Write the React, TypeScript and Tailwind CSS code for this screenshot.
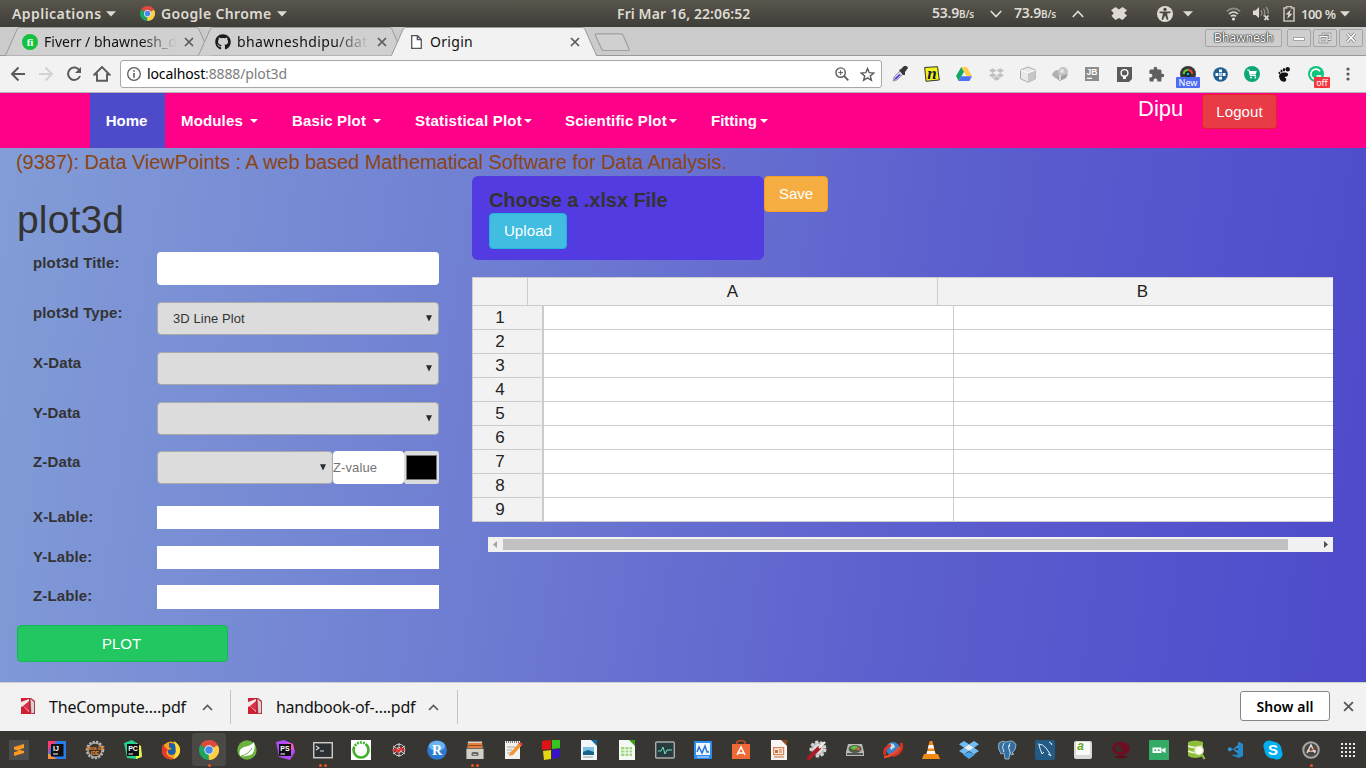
import React from 'react';
import { FaGithub, FaDropbox } from 'react-icons/fa';
import { MdExtension } from 'react-icons/md';

const ui = "font-['Noto_Sans',sans-serif]";
const sans = "font-['Liberation_Sans',Arial,sans-serif]";

/* ---------- small shared drawings ---------- */

function Chrome({ size }: { size: number }) {
  return (
    <svg width={size} height={size} viewBox="0 0 48 48" className="shrink-0">
      <path d="M24 24 L3.2 12 A24 24 0 0 1 44.8 12 Z" fill="#dd4b3e" />
      <path d="M24 24 L24 48 A24 24 0 0 1 3.2 12 Z" fill="#1da462" />
      <path d="M24 24 L44.8 12 A24 24 0 0 1 24 48 Z" fill="#ffce44" />
      <path d="M24 13 H45.3 L44 11 A24 24 0 0 0 24 0Z" fill="#dd4b3e" />
      <path d="M14.5 29.5 L3.2 12 L13 18Z" fill="#1da462" />
      <path d="M33.5 29.5 L24 48 L23 34Z" fill="#ffce44" />
      <circle cx="24" cy="24" r="11.2" fill="#f4f4f4" />
      <circle cx="24" cy="24" r="9" fill="#4688f1" />
    </svg>
  );
}

const Tri = () => (
  <svg width="10" height="6" viewBox="0 0 10 6" className="shrink-0">
    <path d="M0 0.3H10L5 5.5Z" fill="#dfdbd2" />
  </svg>
);

const Close = ({ size = 10 }: { size?: number }) => (
  <svg width={size} height={size} viewBox="0 0 10 10" className="shrink-0">
    <path d="M1 1L9 9M9 1L1 9" stroke="#5a5a5a" strokeWidth="1.7" fill="none" />
  </svg>
);

/* ---------- desktop top panel ---------- */

function TopPanel() {
  return (
    <div className={`flex h-[27px] w-full items-center bg-linear-to-b from-[#59564d] to-[#3e3d38] text-[14px] leading-[26px] font-semibold text-[#dfdbd2] ${ui}`}>
      <span className="ml-3 w-[94px] whitespace-nowrap tracking-[0.45px]">Applications</span>
      <Tri />
      <div className="ml-[24px] flex w-[21px]"><Chrome size={15} /></div>
      <span className="w-[116px] whitespace-nowrap tracking-[0.35px]">Google Chrome</span>
      <Tri />
      <span className="ml-[330px] w-[315px] whitespace-nowrap tracking-[0.1px]">Fri Mar 16, 22:06:52</span>
      <span className="w-[58px] whitespace-nowrap leading-[24px] tracking-[-0.2px]">53.9<span className="text-[10px]">B/s</span></span>
      <svg width="12" height="8" viewBox="0 0 12 8"><path d="M0.8 1L6 6.6L11.2 1" stroke="#dfdbd2" strokeWidth="1.7" fill="none" /></svg>
      <span className="ml-[12px] w-[58px] whitespace-nowrap leading-[24px] tracking-[-0.2px]">73.9<span className="text-[10px]">B/s</span></span>
      <svg width="12" height="8" viewBox="0 0 12 8"><path d="M0.8 7L6 1.4L11.2 7" stroke="#dfdbd2" strokeWidth="1.7" fill="none" /></svg>
      <svg className="ml-[27px]" width="16" height="14" viewBox="0 0 16 14">
        <path d="M4.5 0L8 2.5L11.5 0L16 3.2L13.2 6L16 8.4L11.5 13L8 11L4.5 13L0.5 9L2.8 6L0 3.2Z" fill="#dfdbd2" />
      </svg>
      <svg className="ml-[30px]" width="16" height="16" viewBox="0 0 16 16">
        <circle cx="8" cy="8" r="8" fill="#dfdbd2" />
        <circle cx="8" cy="3.4" r="1.7" fill="#4a4841" />
        <path d="M2.5 5.6L6.5 5.4H9.5L13.5 5.6V7L10 7.4L11.4 13.4L10 13.9L8 9.6L6 13.9L4.6 13.4L6 7.4L2.5 7Z" fill="#4a4841" />
      </svg>
      <div className="ml-[10px]"><Tri /></div>
      <svg className="ml-[33px]" width="15" height="14" viewBox="0 0 15 14" fill="none" strokeWidth="1.6">
        <path d="M0.8 4.4Q7.5 -1.7 14.2 4.4" stroke="#8f8c84" />
        <path d="M3 7Q7.5 3 12 7" stroke="#dfdbd2" />
        <path d="M4.9 9.4Q7.5 7.2 10.1 9.4" stroke="#dfdbd2" />
        <circle cx="7.5" cy="12" r="1.6" fill="#dfdbd2" />
      </svg>
      <svg className="ml-[12px]" width="17" height="15" viewBox="0 0 17 15" fill="none">
        <path d="M0 4.5H2.5L6 1V12L2.5 9H0Z" fill="#dfdbd2" />
        <path d="M8 4Q9.7 6.7 8 9.5M10.5 2.5Q13 6.7 10.5 10.5M13 1Q16 5 15 8" stroke="#8f8c84" strokeWidth="1.4" />
        <path d="M11.5 9.5L15.5 14M15.5 9.5L11.5 14" stroke="#dfdbd2" strokeWidth="1.8" />
      </svg>
      <svg className="ml-[13px]" width="12" height="16" viewBox="0 0 12 16">
        <path d="M3.5 2V0.5H8.5V2H11V15H1V2Z" fill="none" stroke="#c4c0b8" strokeWidth="1.6" />
        <path d="M8 3.5L2.5 8.5H5.5L4 13L9.5 7.7H6.5Z" fill="#dfdbd2" />
      </svg>
      <span className="ml-[6px] w-[39px] whitespace-nowrap text-[13px] tracking-[-0.5px]">100 %</span>
      <Tri />
    </div>
  );
}

/* ---------- browser chrome ---------- */

function Tab({ icon, label, active = false, tracking = '' }: { icon: React.ReactNode; label: string; active?: boolean; tracking?: string }) {
  return (
    <div className="relative -mr-[13px] flex h-[29px] w-[206px] shrink-0 items-center pl-[16px]">
      <svg className="absolute inset-0" width="206" height="29" viewBox="0 0 206 29">
        <path d="M0.5 28.5 L12 2.5 Q13 0.5 14.5 0.5 H191.5 Q193 0.5 194 2.5 L205.5 28.5" fill={active ? '#f2f2f2' : '#d0d0d0'} stroke="#999" strokeWidth="1" />
        {active && <path d="M1 28.5H205" stroke="#f2f2f2" />}
      </svg>
      <div className="relative flex w-[18px] items-center justify-center">{icon}</div>
      <div className="relative ml-[5px] w-[135px] overflow-hidden">
        <div className={`whitespace-nowrap text-[14px] leading-[20px] text-[#111] ${tracking} ${active ? '' : 'mask-r-from-72% mask-r-to-98%'}`}>{label}</div>
      </div>
      <div className="relative ml-[5px] flex"><Close /></div>
    </div>
  );
}

function WinBtn({ children }: { children: React.ReactNode }) {
  return (
    <div className="flex h-[18px] w-[24px] items-center justify-center rounded-[2px] border border-[#a5a5a5] bg-[#cfcfcf]">
      <svg width="14" height="12" viewBox="0 0 14 12">{children}</svg>
    </div>
  );
}

function TabStrip() {
  return (
    <div className={`flex h-[29px] w-full items-start border-b border-[#999] bg-[#cbcbcb] pl-[5px] ${ui}`}>
      <Tab
        label="Fiverr / bhawnesh_d"
        icon={
          <svg width="16" height="16" viewBox="0 0 16 16">
            <circle cx="8" cy="8" r="8" fill="#13c13f" />
            <text x="8" y="12" textAnchor="middle" fontSize="11" fontWeight="700" fill="#fff" fontFamily="Liberation Serif">fi</text>
          </svg>
        }
      />
      <Tab label="bhawneshdipu/dat" tracking="tracking-[0.4px]" icon={<FaGithub size={16} color="#1b1b1b" />} />
      <Tab
        active
        label="Origin"
        tracking="tracking-[0.3px]"
        icon={
          <svg width="11" height="14" viewBox="0 0 11 14">
            <path d="M0.7 0.7H6.5L10.3 4.5V13.3H0.7ZM6.3 0.7V4.7H10.3" fill="#fff" stroke="#555" strokeWidth="1.3" />
          </svg>
        }
      />
      <svg className="ml-[10px] mt-[6px]" width="37" height="19" viewBox="0 0 37 19">
        <path d="M2.5 0.8H27Q28.5 0.8 29 2L35 16Q35.5 17.5 34 17.5H10Q8.3 17.5 7.6 16L1.5 2.5Q1 0.8 2.5 0.8Z" fill="#d0d0d0" stroke="#a0a0a0" strokeWidth="1.2" />
      </svg>
      <div className="ml-auto mr-[3px] mt-[2px] flex">
        <div className="mr-[5px] flex h-[18px] w-[77px] items-center justify-center rounded-[2px] border border-[#a5a5a5] bg-[#cfcfcf] text-[12.5px] tracking-[-0.2px] text-white [text-shadow:0_0_1px_#000,0_0_2px_#333,0_0_1px_#000]">Bhawnesh</div>
        <div className="flex gap-[2px]">
          <WinBtn><path d="M1.5 5.5H12.5V8.5H1.5Z" fill="#fff" stroke="#888" strokeWidth=".7" /></WinBtn>
          <WinBtn>
            <path d="M5 2H12V7.5H5Z" fill="none" stroke="#777" strokeWidth="2.4" /><path d="M5 2H12V7.5H5Z" fill="none" stroke="#fff" strokeWidth="1.2" />
            <path d="M2 4.5H9V10H2Z" fill="#ccc" stroke="#777" strokeWidth="2.4" /><path d="M2 4.5H9V10H2Z" fill="none" stroke="#fff" strokeWidth="1.2" />
          </WinBtn>
          <WinBtn><path d="M3 1.5L11 10M11 1.5L3 10" stroke="#777" strokeWidth="3" /><path d="M3 1.5L11 10M11 1.5L3 10" stroke="#fff" strokeWidth="1.7" /></WinBtn>
        </div>
      </div>
    </div>
  );
}

const extensions: React.ReactNode[] = [
  <svg width="16" height="16" viewBox="0 0 16 16"><path d="M1 15L2 11L8 5L11 8L5 14Z" fill="#d8d8ea" stroke="#777" strokeWidth=".7" /><path d="M2 14L3 12L7.5 8L8.7 9L4.5 13Z" fill="#4d36d8" /><path d="M7 4L9 3L12 0Q15-1 16 2L13 6L13 9L11 9Z" fill="#3a3a3a" /></svg>,
  <svg width="16" height="16" viewBox="0 0 16 16"><path d="M0.7 1.5L13.5 0.7L15.3 14L2 15.3Z" fill="#f2f316" stroke="#333" strokeWidth="1" /><text x="8" y="13" textAnchor="middle" fontSize="17" fontStyle="italic" fontWeight="700" fill="#17173a" fontFamily="Liberation Serif">n</text></svg>,
  <svg width="16" height="14" viewBox="0 0 16 14"><path d="M5.3 0L0 9L2.7 14L8 4.7Z" fill="#11a861" /><path d="M5.3 0H10.7L16 9H10.6Z" fill="#ffcf48" /><path d="M5.2 9.2H16L13.3 14H2.6Z" fill="#4d6ff5" /></svg>,
  <FaDropbox size={15} color="#c0c0c0" />,
  <svg width="18" height="17" viewBox="0 0 18 17"><path d="M1.5 4L9 1L16.5 4V12.8L9 16.3L1.5 12.8Z" fill="#e8e8e8" stroke="#aaa" /><path d="M9 7L16.5 4V12.8L9 16.3Z" fill="#c6c6c6" /><path d="M1.5 4L9 7L16.5 4" fill="none" stroke="#fff" /></svg>,
  <svg width="17" height="16" viewBox="0 0 17 16"><path d="M0 9Q1 5 5 4L9 6L8 12L3 12Z" fill="#b0b0b0" /><circle cx="11" cy="6" r="5" fill="#c4c4c4" /><path d="M4 12L9 10L16 8L14 12L8 15Z" fill="#a0a0a0" /><circle cx="10" cy="5" r="2" fill="#e4e4e4" /><path d="M7 9H9V14H7Z" fill="#ddd" /></svg>,
  <svg width="14" height="14" viewBox="0 0 14 14"><rect width="14" height="14" fill="#8d8d8d" /><text x="7" y="8" textAnchor="middle" fontSize="8.5" fontWeight="700" fill="#fff" fontFamily="Liberation Sans">JB</text><path d="M2 11.3H7" stroke="#fff" strokeWidth="1.3" /></svg>,
  <svg width="15" height="15" viewBox="0 0 15 15"><path d="M0 0H15V12L12 15H0Z" fill="#5b5b5b" /><circle cx="7.5" cy="6" r="3.4" fill="none" stroke="#fff" strokeWidth="1.4" /><path d="M6 8.5H9V12H6Z" fill="#fff" /></svg>,
  <MdExtension size={17} color="#5f5f5f" />,
  <div className="relative h-4 w-4"><svg width="16" height="16" viewBox="0 0 16 16"><circle cx="8" cy="8" r="8" fill="#35373c" /><path d="M3.8 8A4.2 4.2 0 0 1 8 3.8" stroke="#5ad02a" strokeWidth="2.2" fill="none" /><path d="M8 3.8A4.2 4.2 0 0 1 12 8" stroke="#e7482b" strokeWidth="2.2" fill="none" /><circle cx="8" cy="8" r="2.6" fill="#111" /><circle cx="8" cy="8" r="1.5" fill="#07b5d3" /></svg><span className="absolute -left-[4px] top-[11px] flex h-[11px] w-[24px] items-center justify-center rounded-[1px] bg-[#4d6cf5] text-[9px] text-white">New</span></div>,
  <svg width="15" height="15" viewBox="0 0 15 15"><circle cx="7.5" cy="7.5" r="7.3" fill="#1f5d93" /><path d="M6 2.5H9V5.3H6ZM6 9.7H9V12.5H6ZM2.5 6H5.3V9H2.5ZM9.7 6H12.5V9H9.7Z" fill="#fff" /><path d="M6 6H9V9H6Z" fill="#a6cdf0" /></svg>,
  <svg width="16" height="16" viewBox="0 0 16 16"><circle cx="8" cy="8" r="8" fill="#0ca678" /><path d="M3 4H5L6.3 9.5H12" stroke="#fff" strokeWidth="1.1" fill="none" /><path d="M5.5 5H12.7L11.7 8.6H6.3Z" fill="#fff" /><circle cx="7" cy="11.5" r="1" fill="#fff" /><circle cx="11.3" cy="11.5" r="1" fill="#fff" /></svg>,
  <svg width="12" height="15" viewBox="0 0 12 15"><ellipse cx="9.7" cy="2.3" rx="2.2" ry="2.3" fill="#111" /><ellipse cx="6" cy="2.7" rx="1.2" ry="1.7" fill="#111" /><ellipse cx="3.5" cy="4" rx="1" ry="1.5" fill="#111" /><ellipse cx="1.4" cy="6" rx=".9" ry="1.3" fill="#111" /><path d="M1 9Q2 5 7 5.5Q11 6 10 8.3Q9 10 7 9.8Q6 11 8 11.3Q9 14.5 6 14.8Q1.5 14.5 1 9Z" fill="#111" /></svg>,
  <div className="relative h-4 w-4"><svg width="16" height="16" viewBox="0 0 16 16"><circle cx="8" cy="8" r="8" fill="#0fc47d" /><path d="M12 5.3A5 5 0 1 0 12.5 10H8.5" stroke="#fff" strokeWidth="1.6" fill="none" /></svg><span className="absolute left-[6px] top-[11px] flex h-[11px] w-[16px] items-center justify-center rounded-[1px] bg-[#f6353c] text-[9px] text-white">off</span></div>,
  <svg width="4" height="14" viewBox="0 0 4 14" fill="#5a5a5a"><circle cx="2" cy="2" r="1.6" /><circle cx="2" cy="7" r="1.6" /><circle cx="2" cy="12" r="1.6" /></svg>,
];

function Toolbar() {
  return (
    <div className={`flex h-[37px] w-full items-center border-b border-[#b5b5b5] bg-[#f2f2f2] ${ui}`}>
      <div className="flex w-[121px] pl-1">
        <div className="flex w-7 justify-center"><svg width="16" height="16" viewBox="0 0 16 16"><path d="M15 8H2M8.5 1.5L2 8L8.5 14.5" stroke="#5a5a5a" strokeWidth="2" fill="none" /></svg></div>
        <div className="flex w-7 justify-center"><svg width="16" height="16" viewBox="0 0 16 16"><path d="M1 8H14M7.5 1.5L14 8L7.5 14.5" stroke="#d2d2d2" strokeWidth="2" fill="none" /></svg></div>
        <div className="flex w-7 justify-center"><svg width="16" height="16" viewBox="0 0 16 16"><path d="M13.6 4.6A6.2 6.2 0 1 0 14 10" stroke="#5a5a5a" strokeWidth="2" fill="none" /><path d="M15 1V7H9Z" fill="#5a5a5a" /></svg></div>
        <div className="flex w-7 justify-center"><svg width="18" height="16" viewBox="0 0 18 16"><path d="M1.5 8.5L9 1L16.5 8.5H14V14.7H4V8.5Z" stroke="#5a5a5a" strokeWidth="1.9" fill="none" /></svg></div>
      </div>
      <div className="-ml-px flex h-[28px] w-[762px] items-center rounded-[3px] border border-[#a8a8a8] bg-white pl-[6px]">
        <svg width="14" height="14" viewBox="0 0 14 14"><circle cx="7" cy="7" r="6.3" fill="none" stroke="#5a5a5a" strokeWidth="1.3" /><path d="M6.2 3.2H7.8V4.8H6.2ZM6.2 6H7.8V10.8H6.2Z" fill="#5a5a5a" /></svg>
        <span className="mb-px ml-[6px] whitespace-nowrap text-[14px] tracking-[-0.12px] text-black">localhost<span className="text-[#7d7d7d]">:8888/plot3d</span></span>
        <svg className="ml-auto" width="14" height="14" viewBox="0 0 14 14" fill="none" stroke="#5a5a5a"><circle cx="5.6" cy="5.6" r="4.7" strokeWidth="1.4" /><path d="M9.2 9.2L13.3 13.3" strokeWidth="1.8" /><path d="M3.3 5.6H7.9M5.6 3.3V7.9" strokeWidth="1" /></svg>
        <svg className="ml-[11px] mr-[6px]" width="15" height="15" viewBox="0 0 15 15"><path d="M7.5 1.5L9.2 5.7L13.8 6L10.3 8.9L11.4 13.3L7.5 10.9L3.6 13.3L4.7 8.9L1.2 6L5.8 5.7Z" fill="none" stroke="#5a5a5a" strokeWidth="1.4" /></svg>
      </div>
      <div className="ml-[2px] flex">
        {extensions.map((e, i) => (
          <div key={i} className="flex h-5 w-8 items-center justify-center">{e}</div>
        ))}
      </div>
    </div>
  );
}

/* ---------- site navigation ---------- */

const Caret = () => <span className="inline-block border-x-4 border-t-4 border-x-transparent border-t-white" />;

function SiteNav() {
  return (
    <div className={`flex h-[55px] w-full bg-[#ff0089] pl-[90px] text-[15px] font-bold text-white ${sans}`}>
      <div className="flex w-[75px] items-center justify-center bg-[#4e4bcb] pr-[2px] pt-px">Home</div>
      <div className="ml-4 flex w-[111px] items-center gap-[7px] pt-px tracking-[0.15px]">Modules <Caret /></div>
      <div className="flex w-[123px] items-center gap-[7px] pt-px tracking-[0.15px]">Basic Plot <Caret /></div>
      <div className="flex w-[150px] items-center gap-[2px] pt-px tracking-[0.22px]">Statistical Plot <Caret /></div>
      <div className="flex w-[146px] items-center gap-[2px] pt-px tracking-[0.18px]">Scientific Plot <Caret /></div>
      <div className="flex items-center gap-[3px] pt-px">Fitting <Caret /></div>
      <div className="ml-auto mr-[89px] flex items-start font-normal">
        <span className="w-[64px] text-[22px] leading-[32px]">Dipu</span>
        <button className="mt-px h-[35px] w-[75px] rounded-[4px] border border-[#e5232f] bg-[#e83b45] pt-px text-[15px] tracking-[0.1px]">Logout</button>
      </div>
    </div>
  );
}

/* ---------- page content ---------- */

function FakeSelect({ value = '', className }: { value?: string; className: string }) {
  return (
    <div className={`flex h-[33px] items-center justify-between rounded-[4px] border border-[#a9a9a9] bg-[#dcdcdc] pl-[15px] pr-[6px] text-[13px] text-[#333] ${className}`}>
      <span className="tracking-[0.08px]">{value}</span>
      <svg width="6" height="7" viewBox="0 0 7 7" preserveAspectRatio="none"><path d="M0 0.3H7L3.5 6.5Z" fill="#2b2b2b" /></svg>
    </div>
  );
}

function Row({ label, height, children }: { label: string; height: string; children: React.ReactNode }) {
  return (
    <div className={`flex items-start pl-4 ${height}`}>
      <div className="w-[124px] text-[15px] leading-[22px] font-bold tracking-[0.14px] text-[#333]">{label}</div>
      {children}
    </div>
  );
}

function PlotForm() {
  return (
    <div className="w-[455px]">
      <h1 className="flex h-[76px] items-center pt-[11px] text-[39px] leading-[43px] tracking-[0.15px] text-[#333]">plot3d</h1>
      <Row label="plot3d Title:" height="h-[50px]"><div className="h-[33px] w-[282px] rounded-[4px] bg-white" /></Row>
      <Row label="plot3d Type:" height="h-[50px]"><FakeSelect value="3D Line Plot" className="w-[282px]" /></Row>
      <Row label="X-Data" height="h-[50px]"><FakeSelect className="w-[282px]" /></Row>
      <Row label="Y-Data" height="h-[49px]"><FakeSelect className="w-[282px]" /></Row>
      <Row label="Z-Data" height="h-[55px]">
        <FakeSelect className="w-[176px]" />
        <div className="flex h-[33px] w-[71px] items-center rounded-[4px] bg-white text-[13px] tracking-[0.1px] text-[#757575]">Z-value</div>
        <div className="flex h-[33px] w-[35px] items-center justify-center rounded-[3px] bg-[#dcdcdc]">
          <div className="h-[25px] w-[31px] border border-[#777] bg-black" />
        </div>
      </Row>
      <Row label="X-Lable:" height="h-[40px]"><div className="h-[23px] w-[282px] bg-white" /></Row>
      <Row label="Y-Lable:" height="h-[39px]"><div className="h-[23px] w-[282px] bg-white" /></Row>
      <Row label="Z-Lable:" height="h-[40px]"><div className="h-[24px] w-[282px] bg-white" /></Row>
      <button className="h-[37px] w-[211px] rounded-[4px] border border-[#13b955] bg-[#22c761] pr-[2px] pt-px text-[15px] text-white">PLOT</button>
    </div>
  );
}

function Sheet() {
  return (
    <div className="mt-[17px] h-[245px] w-[861px] overflow-hidden border-l border-t border-[#ccc] bg-white text-[17px] text-[#222]">
      <div className="flex h-[28px] border-b border-[#ccc] bg-[#f2f2f2]">
        <div className="w-[55px] shrink-0 border-r border-[#ccc]" />
        <div className="flex w-[410px] shrink-0 items-center justify-center border-r border-[#ccc]">A</div>
        <div className="flex w-[409px] shrink-0 items-center justify-center">B</div>
      </div>
      {Array.from({ length: 9 }, (_, i) => (
        <div key={i} className="flex h-[24px] border-b border-[#ccc]">
          <div className="w-[71px] border-r-2 border-[#ccc] bg-[#f2f2f2] pr-[15px] text-center leading-[23px]">{i + 1}</div>
          <div className="w-[410px] border-r border-[#ccc]" />
        </div>
      ))}
    </div>
  );
}

function DataPanel() {
  return (
    <div className="w-[861px]">
      <div className="flex items-start text-[15px] text-white">
        <div className="h-[84px] w-[292px] rounded-[6px] bg-[#533be2] pl-[17px] pt-[12px]">
          <div className="h-[25px] text-[20px] leading-[25px] font-bold tracking-[-0.08px] text-[#333]">Choose a .xlsx File</div>
          <button className="block h-[36px] w-[78px] rounded-[4px] border border-[#1fb5dd] bg-[#40bde0] pt-px tracking-[0.1px]">Upload</button>
        </div>
        <button className="h-[36px] w-[64px] rounded-[4px] border border-[#f59f22] bg-[#f6ae42] pt-px">Save</button>
      </div>
      <Sheet />
      <div className="ml-4 mt-[15px] flex h-[15px] items-center bg-[#f1f1f1]">
        <div className="flex w-[15px] justify-center pr-px"><svg width="4" height="7" viewBox="0 0 4 7"><path d="M4 0V7L0 3.5Z" fill="#a3a3a3" /></svg></div>
        <div className="h-[11px] w-[785px] bg-[#c1c1c1]" />
        <div className="ml-[31px] flex w-[14px] justify-center"><svg width="4" height="7" viewBox="0 0 4 7"><path d="M0 0V7L4 3.5Z" fill="#505050" /></svg></div>
      </div>
    </div>
  );
}

/* ---------- download shelf ---------- */

function Download({ name, width, gap }: { name: string; width: string; gap: string }) {
  return (
    <div className={`my-[7px] flex items-center border-r border-[#c3c3c3] ${width}`}>
      <svg className="mb-[3px]" width="14" height="16" viewBox="0 0 14 16"><path d="M0 0H10L14 3V16H0Z" fill="#cf1f35" /><path d="M0 4L8 1V14L2 8L0 9Z" fill="#f5e8e8" /><path d="M2 8L8 3V13Z" fill="#d83344" /><path d="M9 0L13.5 4V15L10 16Z" fill="#d9d3d3" stroke="#8e1a28" strokeWidth=".6" /></svg>
      <span className={`ml-[14px] whitespace-nowrap text-[16px] text-[#111] ${gap}`}>{name}</span>
      <svg width="11" height="7" viewBox="0 0 11 7"><path d="M1 6L5.5 1.5L10 6" stroke="#5a5a5a" strokeWidth="1.7" fill="none" /></svg>
    </div>
  );
}

function Shelf() {
  return (
    <div className={`flex h-[49px] w-full border-t border-[#cfcfcf] bg-[#f2f2f2] ${ui}`}>
      <Download name="TheCompute….pdf" width="w-[231px] pl-[21px]" gap="w-[153px] tracking-[-0.15px]" />
      <Download name="handbook-of-….pdf" width="w-[227px] pl-[17px]" gap="w-[152px] tracking-[-0.28px]" />
      <div className="mb-[2px] ml-auto mr-[12px] flex items-center gap-[13px]">
        <button className="h-[30px] w-[90px] rounded-[3px] border border-[#868686] bg-white text-[14px] font-semibold tracking-[0.1px] text-black">Show all</button>
        <Close size={11} />
      </div>
    </div>
  );
}

/* ---------- dock ---------- */

const T = ({ x = 10, y, s, f = '#fff', children }: { x?: number; y: number; s: number; f?: string; children: string }) => (
  <text x={x} y={y} fontSize={s} fill={f} textAnchor="middle" fontWeight="700" fontFamily="Liberation Sans">{children}</text>
);

const dock: React.ReactNode[] = [
  <><rect width="20" height="20" rx="1" fill="#4c4c4c" /><path d="M5 7L15 4V8L10 9.7L15 11V13L5 16V12.3L10 10.7L5 9.5Z" fill="#ff9a1f" /></>,
  <><path d="M1 1H12V10L1 15Z" fill="#fb3c72" /><path d="M10 1H19V19H8L1 16L3 8Z" fill="#277df0" /><path d="M1 13L5 16L10 19H1Z" fill="#f9903a" /><rect x="4" y="4" width="12.5" height="12.5" fill="#101010" /><T x={9} y={11} s={7}>IJ</T><path d="M6 14H11" stroke="#fff" /></>,
  <><circle cx="10" cy="10" r="8" fill="none" stroke="#b9b9b9" strokeWidth="2.4" strokeDasharray="2.2 1.3" /><circle cx="10" cy="10" r="7" fill="#3a342f" stroke="#aaa" strokeWidth="1.3" /><T y={10} s={5} f="#e8892b">Java EE</T><T y={15} s={5} f="#e8892b">IDE</T></>,
  <><path d="M1 3L9 0L15 4L19 14L14 19L4 18Z" fill="#22d48c" /><path d="M13 3L18 6L19 17L13 19Z" fill="#e7f24a" /><rect x="4" y="4" width="12" height="12" fill="#101010" /><T y={11} s={7}>PC</T><path d="M5.5 14H10" stroke="#fff" /></>,
  <><circle cx="10" cy="10.5" r="9" fill="#f9a01b" /><path d="M2 4Q0 10 2 15Q7 21 14 18Q6 18 5 12L7 10Q3 7 2 4Z" fill="#e8352b" /><path d="M8 3Q16 2 16 10Q15 15 10 15Q6 14 7 10L11 9L8 7Z" fill="#1c5ea8" /><path d="M13 1Q20 5 19 12Q17 18 12 19Q17 12 13 1Z" fill="#ffdb35" /></>,
  <foreignObject width="20" height="20"><Chrome size={20} /></foreignObject>,
  <><circle cx="10" cy="10" r="9.7" fill="#6ab33e" /><path d="M17 2Q20 16 9 16Q6 16.5 3 16Q1 9 7 7Q14 6 17 2Z" fill="#fff" /><path d="M4 16Q12 14 15 8" stroke="#6ab33e" fill="none" /></>,
  <><path d="M1 2L9 0L18 4L20 12L15 20L4 17Z" fill="#b24bf7" /><path d="M12 2L18 4L19 10L15 9Z" fill="#f65ac0" /><rect x="4" y="4" width="12" height="12" fill="#101010" /><T y={11} s={7}>PS</T><path d="M5.5 14H10" stroke="#fff" /></>,
  <><rect x=".7" y="2.7" width="18.6" height="15" fill="#2c3032" stroke="#c8c8c8" strokeWidth="1.5" /><path d="M3 6L6 8L3 10M7 11H11" stroke="#ddd" strokeWidth="1.1" fill="none" /></>,
  <><rect width="20" height="20" fill="#fff" /><circle cx="10" cy="10" r="7.5" fill="none" stroke="#43b02a" strokeWidth="2.6" strokeDasharray="27 1 2 1 2 1 2 1 2 1" /></>,
  <><g fill="none" stroke="#ddd" strokeWidth=".9"><circle cx="10" cy="10" r="5.8" /><path d="M10 3V17M4 6L16 14M4 14L16 6" /><circle cx="10" cy="10" r="2.5" /></g><path d="M4 11L7 9L9 12L12 8L15 11" stroke="#f02b2b" strokeWidth="2" fill="none" /></>,
  <><circle cx="10" cy="10" r="9.8" fill="#2d7bd1" /><ellipse cx="10" cy="6" rx="8" ry="5" fill="#6cb1f2" /><text x="10" y="15" fontSize="14" fontWeight="700" fill="#fff" textAnchor="middle" fontFamily="Liberation Serif">R</text></>,
  <><path d="M3 1H17L18.5 8V19H1.5V8Z" fill="#6d6964" /><path d="M3 3H17V8H3Z" fill="#e8803c" /><path d="M3 2.3H17" stroke="#eee" /><path d="M3 5.5H17" stroke="#8a4a20" /><path d="M1.5 9H18.5V19H1.5Z" fill="#d3cfc7" /><rect x="6.5" y="12" width="7" height="4" rx="1.5" fill="#666" /><path d="M8 14.7H12" stroke="#ccc" /></>,
  <><path d="M2 1H17V19H2Z" fill="#f1f1ee" /><path d="M3 2H16" stroke="#777" strokeWidth="2" strokeDasharray="1 1" /><path d="M4 7H12M4 10H9M4 13H8" stroke="#aaa" /><path d="M6 16L7 13L16 3L19 5L10 15Z" fill="#ef9637" /><path d="M15.5 3.5L17.5 2L20 4L18.5 6Z" fill="#d63b3b" /></>,
  <><path d="M1 1L10 0V9L1 10Z" fill="#e01212" /><path d="M11 0H19V8L11 9Z" fill="#36c41e" /><path d="M2 11L10 10V19L3 20Z" fill="#e3d714" /><path d="M11 10L19 9V17L11 19Z" fill="#3712c7" /></>,
  <><path d="M2 0H13L18 5V20H2Z" fill="#f2f6f8" /><path d="M12 0H18V6Z" fill="#106ba5" /><rect x="4" y="7" width="11" height="8" fill="#7cc0e4" /><path d="M4 12L9 10L15 12V15H4Z" fill="#16638d" /><path d="M4 17H14" stroke="#999" /></>,
  <><path d="M2 0H13L18 5V20H2Z" fill="#f4f8f2" /><path d="M12 0H18V6Z" fill="#34a10e" /><rect x="4" y="7" width="11" height="9" fill="#9bd67f" /><path d="M4 10H15M4 13H15M8 7V16M12 7V16" stroke="#fff" /></>,
  <><rect x=".7" y="2" width="18.6" height="16" rx="1" fill="#283b3e" stroke="#aaa" strokeWidth="1.4" /><path d="M3 11H6L8 7L10 14L12 10H17" stroke="#6fe3c1" fill="none" /></>,
  <><rect x="1" y="1" width="18" height="18" rx="1" fill="#2d8df1" /><path d="M3 3H17V15H3Z" fill="#f1f8ff" /><path d="M4 12L6 7L9 13L12 6L14 12H16" stroke="#2572d8" strokeWidth="1.5" fill="none" /><path d="M4 17H16" stroke="#fff" strokeWidth=".8" /></>,
  <><path d="M6 5V2Q10-1 14 2V5" fill="none" stroke="#c44a22" strokeWidth="1.6" /><path d="M1 4H19V19H1Z" fill="#ed6a36" /><path d="M6 15L10 7L14 15M7 13H13" stroke="#fff" strokeWidth="1.5" fill="none" /></>,
  <><path d="M2 0H13L18 5V20H2Z" fill="#f8f5f2" /><path d="M12 0H18V6Z" fill="#8e4a1d" /><rect x="4.6" y="7.6" width="10" height="7" fill="#fbe9de" stroke="#d98558" strokeWidth="1.2" /><path d="M6 10H9V13H6Z" fill="#c96c40" /><path d="M10 10H13M10 12H13M5 17H15" stroke="#c96c40" /></>,
  <><circle cx="11" cy="9" r="7" fill="#aaa" stroke="#d6d6d6" strokeWidth="3" strokeDasharray="3 2" /><circle cx="11" cy="9" r="5" fill="#ddd" /><path d="M2 18L12 8" stroke="#a81d25" strokeWidth="4" strokeLinecap="round" /><path d="M12 8L18 2" stroke="#eee" strokeWidth="2.3" /></>,
  <><path d="M3 4H17L19 12V16H1V12Z" fill="#b8b8b4" /><ellipse cx="10" cy="9" rx="6.5" ry="4" fill="#4d5c48" /><path d="M5 8Q10 4 13 7L9 10Z" fill="#61c53c" /><path d="M10 9L14 7L15 11Z" fill="#e5623f" /><path d="M2 14H18" stroke="#555" strokeWidth="2" /></>,
  <><circle cx="10" cy="9" r="7" fill="#3b83c6" /><path d="M6 4Q11 2 12 7L8 10Z" fill="#c5e1f4" /><path d="M2 15Q0 8 8 5M18 3Q21 12 10 16" stroke="#e5301c" strokeWidth="2.6" fill="none" /><path d="M1 17Q9 17 17 7" stroke="#f3492b" strokeWidth="2.3" fill="none" /></>,
  <><path d="M3 14H17L19 19H1Z" fill="#f28a16" /><path d="M8.7 1H11.3L15 16H5Z" fill="#f28a16" /><path d="M7.7 5H12.3L13.2 8.5H6.8ZM6.2 11H13.8L14.5 14H5.5Z" fill="#f3f3f3" /></>,
  <><path d="M5 1L10 4.3L5 7.7L0 4.3ZM15 1L20 4.3L15 7.7L10 4.3ZM5 7.7L10 11L5 14.3L0 11ZM15 7.7L20 11L15 14.3L10 11Z" fill="#6fbdf5" /><path d="M10 4.3L15 7.7L10 11L5 7.7Z" fill="#e1f2ff" /><path d="M4 14.5L10 12L16 14.5L10 19Z" fill="#4ba5e8" /></>,
  <><path d="M2 3Q5 0 9 2Q17-1 19 5Q19 10 15 13L17 14L14 15L13 12L12 19H8L7 13L4 14Q0 8 2 3Z" fill="#336f9e" stroke="#9eb9cd" strokeWidth=".9" /><path d="M7 3Q4 7 7 12M13 3Q10 8 13 12" stroke="#d2e2ee" fill="none" /><circle cx="12" cy="6" r=".8" fill="#fff" /></>,
  <><rect width="20" height="20" rx="2" fill="#235b86" /><path d="M3 4Q8 4 11 8Q14 12 16 16L13 14M4 5Q5 9 7 14L9 12M14 2L17 4L16 5" stroke="#e5eff6" fill="none" /></>,
  <><rect x="1" y="1" width="18" height="18" rx="2" fill="#d9d9d6" /><rect x="3" y="2" width="14" height="13" rx="1" fill="#fafafa" /><text x="7.5" y="10" fontSize="12" fontStyle="italic" fontWeight="700" fill="#62a924" textAnchor="middle" fontFamily="Liberation Sans">a</text></>,
  <><ellipse cx="10" cy="8.5" rx="9" ry="6.8" fill="#6e0e22" /><ellipse cx="8.5" cy="8.7" rx="4.6" ry="3.6" fill="#38322f" /><path d="M8 8L13 5.5V11M10 9L16 9.5L13 14" stroke="#6e0e22" strokeWidth="1.7" fill="none" /><path d="M3 17Q11 13.5 17 17Q10 20 3 17Z" fill="#5a0d1f" /></>,
  <><rect width="20" height="20" rx="1" fill="#33ab66" /><rect x="3.5" y="7.5" width="9" height="5.5" fill="#fff" /><path d="M13 9.5L16.5 7.5V13L13 11Z" fill="#fff" /><circle cx="6.3" cy="10.2" r="1" fill="#33ab66" /><circle cx="9.7" cy="10.2" r="1" fill="#33ab66" /></>,
  <><path d="M1 2Q8-1 16 2V16Q8 20 1 16Z" fill="#8dbd3b" /><path d="M1 6Q8 9 15 6M1 11Q8 14 12 12" stroke="#eef6da" strokeWidth="1.5" fill="none" /><circle cx="12" cy="10.5" r="4.3" fill="#fdfdf3" stroke="#cfe0a3" strokeWidth="1.2" /><path d="M14.5 14L17.5 19" stroke="#8dbd3b" strokeWidth="2.4" /></>,
  <><path d="M14 2L18 4V16L14 18L6 15L13 14.5V2Z" fill="#2489ca" /><path d="M13 5L5 11.5L3 10.5V8L5 7L13 13.5V10.5L8.5 9.2L13 8Z" fill="#2f93d8" /></>,
  <><circle cx="6" cy="6" r="5.6" fill="#00aff0" /><circle cx="14" cy="14" r="5.6" fill="#00aff0" /><circle cx="10" cy="10" r="8.6" fill="#00aff0" /><T y={15.3} s={15}>S</T></>,
  <><circle cx="10" cy="10" r="7.8" fill="#494744" stroke="#a8a6a2" strokeWidth="2" /><path d="M6 13L10 5L14 13M6 11H15" stroke="#dedcd8" strokeWidth="1.5" fill="none" /><path d="M9 11L14 8" stroke="#c94a2a" strokeWidth="1.3" /></>,
  <g fill="#e8e8e8">{[4, 8, 12, 16].map((y) => [4, 8, 12, 16].map((x) => <rect key={`${x}-${y}`} x={x - 1} y={y - 1} width="2" height="2" />))}</g>,
];

const running: Record<number, number> = { 5: 1, 8: 2, 12: 2, 34: 1 };

function Dock() {
  return (
    <div className="flex h-[37px] w-full overflow-hidden bg-[#383632]">
      {dock.map((icon, i) => (
        <div key={i} className={`relative flex h-full w-[38px] shrink-0 items-center justify-center ${i === 35 ? '-ml-px' : ''}`}>
          {i === 5 && <div className="absolute inset-x-[2px] inset-y-[2px] rounded-[3px] bg-[#4b4945]" />}
          <svg className="relative" width="20" height="20" viewBox="0 0 20 20">{icon}</svg>
          {running[i] && (
            <div className="absolute inset-x-0 bottom-[1px] flex justify-center gap-[2px]">
              {Array.from({ length: running[i] }, (_, k) => <span key={k} className="size-[3px] rounded-full bg-[#e95420]" />)}
            </div>
          )}
        </div>
      ))}
    </div>
  );
}

export default function App() {
  return (
    <div className="flex h-[768px] w-[1366px] flex-col overflow-hidden">
      <TopPanel />
      <TabStrip />
      <Toolbar />
      <SiteNav />
      <main className={`h-[534px] bg-[linear-gradient(98deg,#829dd7_0%,#707fd2_34%,#5c5fce_67%,#4e4acb_100%)] pl-[17px] ${sans}`}>
        <div className="-ml-px h-[28px] whitespace-nowrap text-[20px] leading-[28px] tracking-[-0.06px] text-[#8b4513]">(9387): Data ViewPoints : A web based Mathematical Software for Data Analysis.</div>
        <div className="flex">
          <PlotForm />
          <DataPanel />
        </div>
      </main>
      <Shelf />
      <Dock />
    </div>
  );
}
